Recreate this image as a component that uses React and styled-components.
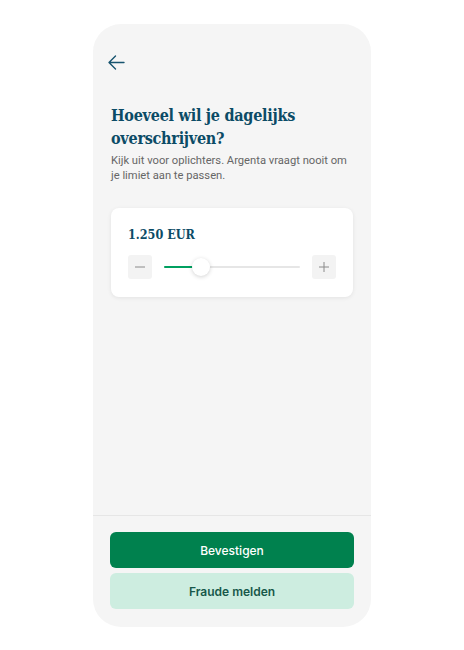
import React, { useState } from "react";
import styled, { createGlobalStyle } from "styled-components";

const GlobalStyle = createGlobalStyle`
  body {
    margin: 0;
    background: #ffffff;
    font-family: Inter, "Noto Sans", sans-serif;
  }
`;

const Phone = styled.div`
  width: 278px;
  height: 603px;
  margin: 24px auto 0;
  background: #f5f5f5;
  border-radius: 28px;
  display: flex;
  flex-direction: column;
  overflow: hidden;
`;

const Content = styled.div`
  flex: 1;
  padding: 26px 18px 0;
  display: flex;
  flex-direction: column;
`;

const BackButton = styled.button`
  width: 24px;
  height: 24px;
  padding: 0;
  margin-left: -3px;
  border: none;
  background: none;
  color: #17546f;
  display: flex;
  align-items: center;
  justify-content: flex-start;
  cursor: pointer;
`;

const Title = styled.h1`
  margin: 30px 0 0;
  font-family: "DejaVu Serif Condensed", "DejaVu Serif", serif;
  font-stretch: condensed;
  font-weight: 700;
  font-size: 16px;
  line-height: 23px;
  letter-spacing: -0.25px;
  color: #0b4b66;
`;

const Subtitle = styled.p`
  margin: 3px 0 0;
  font-family: Roboto, "Noto Sans", sans-serif;
  font-size: 11.2px;
  line-height: 15px;
  color: #666666;
`;

const Card = styled.div`
  margin-top: 25px;
  background: #ffffff;
  border-radius: 8px;
  padding: 19px 17px 18px;
  box-shadow: 0 1px 4px rgba(0, 0, 0, 0.08);
`;

const Amount = styled.div`
  font-family: "DejaVu Serif Condensed", "DejaVu Serif", serif;
  font-stretch: condensed;
  font-weight: 700;
  font-size: 12.5px;
  line-height: 16px;
  color: #0b4b66;
`;

const SliderRow = styled.div`
  margin-top: 12px;
  display: flex;
  align-items: center;
  gap: 12px;
`;

const StepButton = styled.button`
  width: 24px;
  height: 24px;
  padding: 0;
  border: none;
  border-radius: 3px;
  background: #f3f3f3;
  color: #8a8a8a;
  display: flex;
  align-items: center;
  justify-content: center;
  cursor: pointer;
`;

const Track = styled.div`
  position: relative;
  flex: 1;
  height: 2px;
  background: #e6e6e6;
  border-radius: 1px;
`;

const Fill = styled.div`
  height: 100%;
  background: #00a060;
  border-radius: 1px;
`;

const Thumb = styled.div`
  position: absolute;
  top: 50%;
  width: 18px;
  height: 18px;
  border-radius: 50%;
  background: #ffffff;
  box-shadow: 0 1px 4px rgba(0, 0, 0, 0.18);
  transform: translate(-50%, -50%);
`;

const Footer = styled.div`
  border-top: 1px solid #e6e6e6;
  padding: 16px 17px 18px;
  display: flex;
  flex-direction: column;
  gap: 5px;
`;

const ActionButton = styled.button`
  height: 36px;
  border: none;
  border-radius: 6px;
  font-family: Inter, "Noto Sans", sans-serif;
  font-size: 12px;
  font-weight: ${({ variant }) => (variant === "primary" ? 500 : 600)};
  background: ${({ variant }) => (variant === "primary" ? "#00814e" : "#cdede0")};
  color: ${({ variant }) => (variant === "primary" ? "#ffffff" : "#17584a")};
  cursor: pointer;
`;

const Minus = () => (
  <svg width="12" height="12" viewBox="0 0 12 12" fill="none">
    <path d="M1 6h10" stroke="currentColor" strokeWidth="1" />
  </svg>
);

const Plus = () => (
  <svg width="12" height="12" viewBox="0 0 12 12" fill="none">
    <path d="M1 6h10M6 1v10" stroke="currentColor" strokeWidth="1" />
  </svg>
);

export default function App() {
  const [amount] = useState(1250);
  const pct = 27;

  return (
    <>
      <GlobalStyle />
      <Phone>
        <Content>
          <BackButton aria-label="Terug">
            <svg width="17" height="15" viewBox="0 0 17 15" fill="none">
              <path
                d="M16 7.5H1.5M7.5 1L1 7.5L7.5 14"
                stroke="currentColor"
                strokeWidth="1.4"
                strokeLinecap="round"
                strokeLinejoin="round"
              />
            </svg>
          </BackButton>
          <Title>
            Hoeveel wil je dagelijks
            <br />
            overschrijven?
          </Title>
          <Subtitle>
            Kijk uit voor oplichters. Argenta vraagt nooit om je limiet aan te
            passen.
          </Subtitle>
          <Card>
            <Amount>{amount.toLocaleString("nl-BE")} EUR</Amount>
            <SliderRow>
              <StepButton aria-label="Minder">
                <Minus />
              </StepButton>
              <Track>
                <Fill style={{ width: `${pct}%` }} />
                <Thumb style={{ left: `${pct}%` }} />
              </Track>
              <StepButton aria-label="Meer">
                <Plus />
              </StepButton>
            </SliderRow>
          </Card>
        </Content>
        <Footer>
          <ActionButton variant="primary">Bevestigen</ActionButton>
          <ActionButton variant="secondary">Fraude melden</ActionButton>
        </Footer>
      </Phone>
    </>
  );
}
